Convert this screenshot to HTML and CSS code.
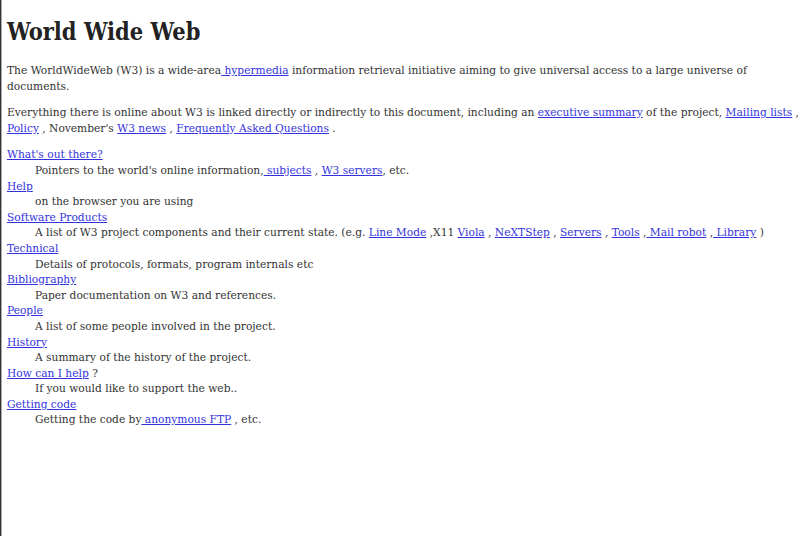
FILE: index.html
```html
<!DOCTYPE html>
<html>
<head>
    <title>The World Wide Web project</title>
    <link rel="stylesheet" href="styles.css">
</head>
<body>
    <h1>World Wide Web</h1>
    <p>The WorldWideWeb (W3) is a wide-area<a href="#"> hypermedia</a> information retrieval
    initiative aiming to give universal access to a large universe of documents.</p>
    <p>Everything there is online about W3 is linked directly or indirectly to this document, including an <a href="#">executive summary</a> of the project, <a href="#">Mailing lists</a> , <a href="#">Policy</a> , November's <a href="#">W3 news</a> , <a href="#">Frequently Asked Questions</a> .</p>
    <dl>
        <dt><a href="#">What's out there?</a></dt>
        <dd>Pointers to the world's online information,<a href="#"> subjects</a> , <a href="#">W3 servers</a>, etc.</dd>
        <dt><a href="#">Help</a></dt>
        <dd>on the browser you are using</dd>
        <dt><a href="#">Software Products</a></dt>
        <dd>A list of W3 project components and their current state. (e.g. <a href="#">Line Mode</a> ,X11 <a href="#">Viola</a> , <a href="#">NeXTStep</a> , <a href="#">Servers</a> , <a href="#">Tools</a> ,<a href="#"> Mail robot</a> ,<a href="#"> Library</a> )</dd>
        <dt><a href="#">Technical</a></dt>
        <dd>Details of protocols, formats, program internals etc</dd>
        <dt><a href="#">Bibliography</a></dt>
        <dd>Paper documentation on W3 and references.</dd>
        <dt><a href="#">People</a></dt>
        <dd>A list of some people involved in the project.</dd>
        <dt><a href="#">History</a></dt>
        <dd>A summary of the history of the project.</dd>
        <dt><a href="#">How can I help</a> ?</dt>
        <dd>If you would like to support the web..</dd>
        <dt><a href="#">Getting code</a></dt>
        <dd>Getting the code by<a href="#"> anonymous FTP</a> , etc.</dd>
    </dl>
</body>
</html>
```

FILE: styles.css
```css
html {
    min-height: 100%;
    border-left: 1px solid #333;
    box-shadow: inset 1px 0 0 #aaa;
}
body {
    margin: 0;
    padding: 8px 0 8px 6px;
    font-family: "DejaVu Serif Condensed", "DejaVu Serif", serif;
    font-size: 11.85px;
    line-height: 15.6px;
    color: #333;
}
h1 {
    font-size: 23.4px;
    line-height: 30px;
    margin: 9px 0 16px;
    color: #222;
}
p {
    margin: 0 0 11px;
}
a {
    color: #3333dd;
}
dl {
    margin: 11px 0;
}
dd {
    margin-left: 28px;
}
```
